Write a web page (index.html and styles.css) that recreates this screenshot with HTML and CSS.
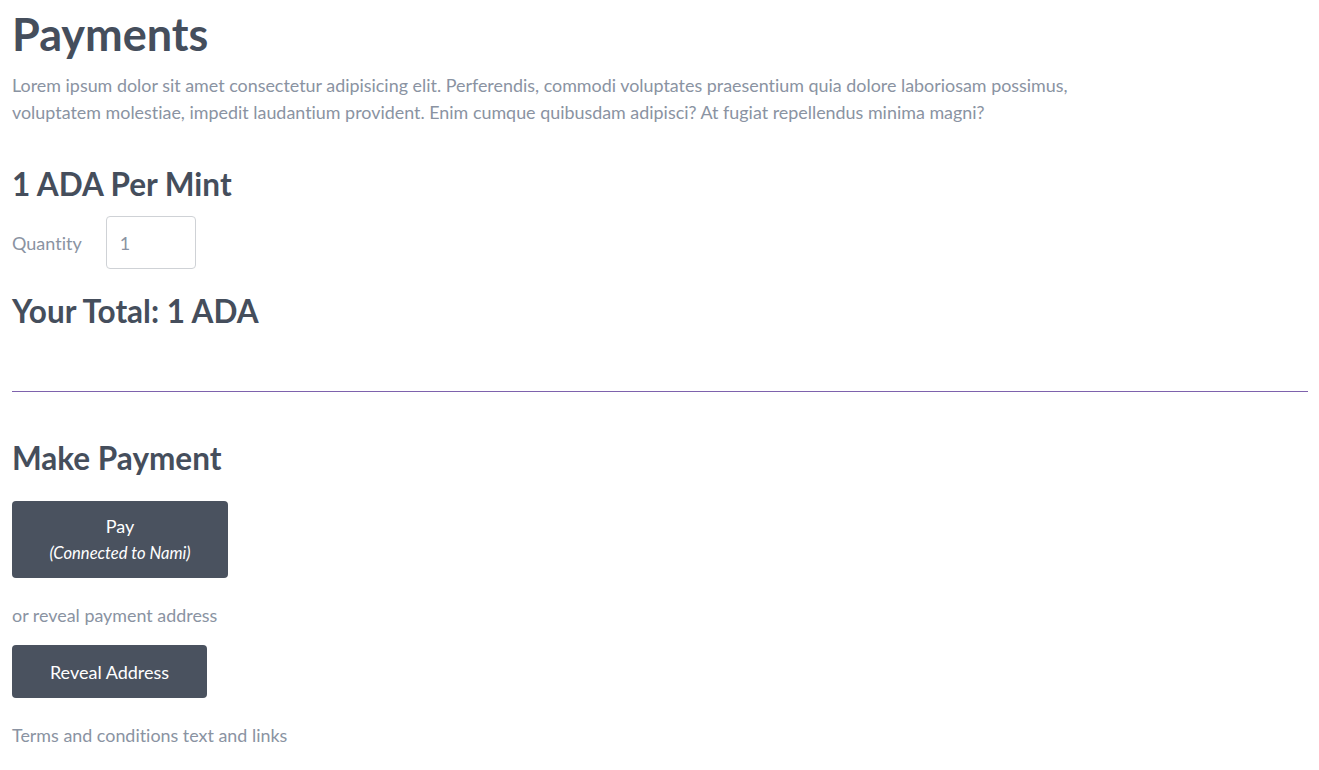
FILE: index.html
```html
<!DOCTYPE html>
<html lang="en">
<head>
<meta charset="utf-8">
<title>Payments</title>
<link rel="stylesheet" href="styles.css">
</head>
<body>
<main class="page">
  <h1 class="title">Payments</h1>
  <p class="intro">Lorem ipsum dolor sit amet consectetur adipisicing elit. Perferendis, commodi voluptates praesentium quia dolore laboriosam possimus, voluptatem molestiae, impedit laudantium provident. Enim cumque quibusdam adipisci? At fugiat repellendus minima magni?</p>

  <h2 class="price">1 ADA Per Mint</h2>
  <div class="qty-row">
    <label class="qty-label" for="qty">Quantity</label>
    <input class="qty-input" id="qty" type="number" value="1">
  </div>
  <h2 class="total">Your Total: 1 ADA</h2>

  <hr class="divider">

  <h2 class="make">Make Payment</h2>
  <button class="btn btn-pay">Pay<br><em class="btn-sub">(Connected to Nami)</em></button>
  <p class="muted or">or reveal payment address</p>
  <button class="btn btn-reveal">Reveal Address</button>
  <p class="muted terms">Terms and conditions text and links</p>
</main>
</body>
</html>
```
FILE: styles.css
```css
html, body {
  margin: 0;
  padding: 0;
  background: #ffffff;
}
body {
  font-family: Lato, "Open Sans", sans-serif;
  font-variant-ligatures: none;
  color: #474f5d;
}
.page {
  padding: 0 11px 0 12px;
}
.title {
  margin: 0;
  padding-top: 8px;
  font-size: 45px;
  font-weight: 700;
  line-height: 52px;
  color: #454e5c;
}
.intro {
  margin: 12px 0 0;
  max-width: 1100px;
  font-size: 17.9px;
  line-height: 27px;
  color: #8a93a2;
}
.price, .total, .make {
  margin: 0;
  font-size: 31.5px;
  font-weight: 700;
  line-height: 40px;
  color: #454e5c;
}
.price {
  margin-top: 38px;
}
.qty-row {
  display: flex;
  align-items: center;
  gap: 24px;
  margin-top: 12px;
}
.qty-label {
  font-size: 18px;
  color: #8a93a2;
}
.qty-input {
  width: 90px;
  height: 53px;
  box-sizing: border-box;
  border: 1px solid #cfd2d6;
  border-radius: 4px;
  padding: 0 13px;
  font-family: Lato, sans-serif;
  font-size: 18px;
  color: #8a93a2;
  -moz-appearance: textfield;
  appearance: textfield;
}
.qty-input::-webkit-inner-spin-button,
.qty-input::-webkit-outer-spin-button {
  -webkit-appearance: none;
  margin: 0;
}
.total {
  margin-top: 22px;
}
.divider {
  margin: 60px 0 0;
  border: 0;
  border-top: 1px solid #7e62ad;
}
.make {
  margin-top: 46px;
}
.btn {
  display: block;
  border: 0;
  border-radius: 4px;
  background: #4a525f;
  color: #ffffff;
  font-family: Lato, sans-serif;
  font-variant-ligatures: none;
  cursor: pointer;
}
.btn-pay {
  margin-top: 23px;
  width: 216px;
  height: 77px;
  font-size: 18px;
  line-height: 26px;
}
.btn-sub {
  font-size: 16.6px;
}
.muted {
  margin: 0;
  font-size: 17.9px;
  line-height: 27px;
  color: #8a93a2;
}
.or {
  margin-top: 24px;
}
.btn-reveal {
  margin-top: 16px;
  width: 195px;
  height: 53px;
  font-size: 18px;
}
.terms {
  margin-top: 24px;
}
```
